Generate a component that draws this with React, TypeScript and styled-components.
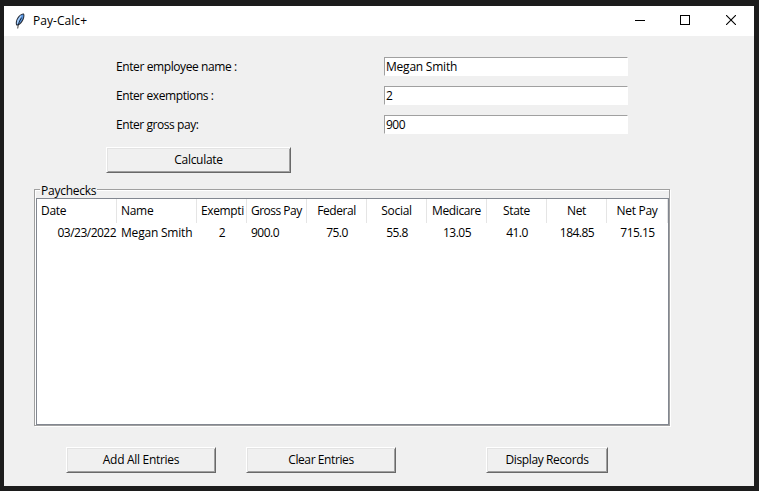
import React from 'react';
import styled, { createGlobalStyle } from 'styled-components';

const Global = createGlobalStyle`
  * { box-sizing: border-box; }
  html, body { margin: 0; height: 100%; background: #1c1c1c; }
  body {
    overflow: hidden;
    font-family: "Open Sans", "Noto Sans", sans-serif;
    font-size: 12px;
    line-height: 16px;
    color: #000;
  }
`;

const Desktop = styled.div`
  width: 759px;
  height: 491px;
  padding: 6px 5px 5px 4px;
  background: #1c1c1c;
`;

const Window = styled.div`
  display: flex;
  flex-direction: column;
  width: 750px;
  height: 480px;
  background: #f0f0f0;
`;

const TitleBar = styled.header`
  display: flex;
  align-items: center;
  height: 30px;
  flex: none;
  padding-left: 8px;
  background: #fff;
`;

const Title = styled.div`
  flex: 1;
  margin-left: 5px;
`;

const Controls = styled.div`
  display: flex;
  height: 100%;
`;

const ControlButton = styled.button`
  display: flex;
  align-items: center;
  justify-content: center;
  width: 46px;
  height: 28px;
  padding: 0;
  border: 0;
  background: transparent;

  &:first-child { margin-right: -1px; }
`;

const Text = styled.span<{ $track?: number }>`
  white-space: nowrap;
  letter-spacing: ${({ $track = -0.3 }) => $track}px;
`;

const Form = styled.div`
  display: grid;
  grid-template-columns: 268px 244px;
  row-gap: 10px;
  padding: 21px 0 0 112px;
`;

const Label = styled.label`
  height: 19px;
  line-height: 19px;
`;

const Field = styled.div`
  height: 19px;
  padding-left: 1px;
  line-height: 18px;
  background: #fff;
  border: 1px solid;
  border-color: #a0a0a0 #fff #fff #a0a0a0;
`;

const Button = styled.button<{ $width: number }>`
  width: ${({ $width }) => $width}px;
  height: 26px;
  padding: 0;
  font: inherit;
  line-height: 22px;
  color: #000;
  background: #f0f0f0;
  border: 1px solid;
  border-color: #fff #696969 #696969 #fff;
  box-shadow: inset 1px 1px #e3e3e3, inset -1px -1px #a0a0a0;
`;

const CalculateRow = styled.div`
  display: flex;
  padding: 13px 0 0 102px;
`;

const Group = styled.section`
  display: flex;
  flex-direction: column;
  width: 636px;
  height: 237px;
  margin: 16px 0 0 30px;
  padding: 0 0 0 1px;
  border: 1px solid #a0a0a0;
  box-shadow: 1px 1px #fff, inset 1px 1px #fff;
`;

const Legend = styled.div`
  align-self: flex-start;
  height: 16px;
  margin: -8px 0 0 4px;
  padding: 0 1px;
  line-height: 17px;
  background: #f0f0f0;
`;

const Table = styled.div`
  flex: none;
  width: 633px;
  height: 227px;
  background: #fff;
  border: 1px solid #828790;
`;

const Columns = styled.div`
  display: grid;
  grid-template-columns: 80px 80px 50px repeat(6, 60px) 61px;
`;

type Align = 'left' | 'center' | 'right';

const HeaderCell = styled.div<{ $align: Align }>`
  height: 24px;
  padding: 0 ${({ $align }) => ($align === 'center' ? 4 : 2)}px 0 4px;
  line-height: 24px;
  text-align: ${({ $align }) => $align};
  border-right: 1px solid #e5e5e5;
`;

const Clip = styled.div`
  overflow: hidden;
  white-space: nowrap;
`;

const Cell = styled.div<{ $align: Align }>`
  height: 20px;
  padding: 0 ${({ $align }) => ($align === 'right' ? 1 : 4)}px 0 4px;
  line-height: 20px;
  white-space: nowrap;
  text-align: ${({ $align }) => $align};
`;

const Actions = styled.div`
  display: flex;
  padding: 21px 0 0 62px;
  gap: 30px;

  & > :last-child { margin-left: 60px; }
`;

const Feather = () => (
  <svg width="16" height="16" viewBox="0 0 16 16">
    <path d="M4.4 12.6C3 9.8 4.3 5.8 6.8 3 8.4 1.2 10.6.1 11.8.5c1 .8.7 3.4 0 5.5-1 2.9-3.3 5.6-5.6 6.6z" fill="#2a2f38" />
    <path d="M4.9 11C4.4 8.4 5.5 6 7.5 3.7 8.9 2.1 10.4 1.2 11.2 1.5c.5.6.2 2.6-.4 4.1C9.9 8 8 10.4 6 11.7z" fill="#5a98e4" />
    <path d="M9 2.9C7 5.3 5.6 8 5.4 10.6" stroke="#b4d4f8" strokeWidth="1.2" fill="none" />
    <path d="M9.6 4.6C7.5 8 6.1 11 5.7 15.5" stroke="#111" strokeWidth=".8" fill="none" />
  </svg>
);

type Column = {
  head: string;
  value: string;
  headAlign: Align;
  align: Align;
  headTrack?: number;
  track?: number;
};

const columns: Column[] = [
  { head: 'Date', value: '03/23/2022', headAlign: 'left', align: 'right', track: -0.52 },
  { head: 'Name', value: 'Megan Smith', headAlign: 'left', align: 'left', track: -0.2 },
  { head: 'Exempti', value: '2', headAlign: 'left', align: 'center', headTrack: -0.38 },
  { head: 'Gross Pay', value: '900.0', headAlign: 'left', align: 'left', headTrack: -0.52, track: -0.5 },
  { head: 'Federal', value: '75.0', headAlign: 'center', align: 'center', headTrack: -0.45, track: -0.5 },
  { head: 'Social', value: '55.8', headAlign: 'center', align: 'center', track: -0.5 },
  { head: 'Medicare', value: '13.05', headAlign: 'center', align: 'center', headTrack: -0.4, track: -0.5 },
  { head: 'State', value: '41.0', headAlign: 'center', align: 'center', track: -0.5 },
  { head: 'Net', value: '184.85', headAlign: 'center', align: 'center', track: -0.5 },
  { head: 'Net Pay', value: '715.15', headAlign: 'center', align: 'center', track: -0.5 },
];

export default function App() {
  return (
    <>
      <Global />
      <Desktop>
        <Window>
          <TitleBar>
            <Feather />
            <Title><Text $track={0.05}>Pay-Calc+</Text></Title>
            <Controls>
              <ControlButton aria-label="Minimize">
                <svg width="10" height="10" shapeRendering="crispEdges"><path d="M0 5.5H10" stroke="#000" /></svg>
              </ControlButton>
              <ControlButton aria-label="Maximize">
                <svg width="10" height="10" shapeRendering="crispEdges"><path d="M.5.5h9v9h-9z" fill="none" stroke="#000" /></svg>
              </ControlButton>
              <ControlButton aria-label="Close">
                <svg width="10" height="10"><path d="M0 0 10 10M10 0 0 10" stroke="#000" strokeWidth="1.1" /></svg>
              </ControlButton>
            </Controls>
          </TitleBar>
          <Form>
            <Label><Text $track={-0.4}>Enter employee name :</Text></Label>
            <Field><Text $track={-0.22}>Megan Smith</Text></Field>
            <Label><Text $track={-0.42}>Enter exemptions :</Text></Label>
            <Field><Text>2</Text></Field>
            <Label><Text $track={-0.43}>Enter gross pay:</Text></Label>
            <Field><Text $track={-0.5}>900</Text></Field>
          </Form>
          <CalculateRow>
            <Button $width={185}><Text>Calculate</Text></Button>
          </CalculateRow>
          <Group>
            <Legend><Text $track={-0.25}>Paychecks</Text></Legend>
            <Table>
              <Columns>
                {columns.map((c) => (
                  <HeaderCell key={c.head} $align={c.headAlign}>
                    <Clip><Text $track={c.headTrack}>{c.head}</Text></Clip>
                  </HeaderCell>
                ))}
              </Columns>
              <Columns>
                {columns.map((c) => (
                  <Cell key={c.head} $align={c.align}><Text $track={c.track}>{c.value}</Text></Cell>
                ))}
              </Columns>
            </Table>
          </Group>
          <Actions>
            <Button $width={150}><Text>Add All Entries</Text></Button>
            <Button $width={150}><Text $track={-0.4}>Clear Entries</Text></Button>
            <Button $width={122}><Text $track={-0.38}>Display Records</Text></Button>
          </Actions>
        </Window>
      </Desktop>
    </>
  );
}
